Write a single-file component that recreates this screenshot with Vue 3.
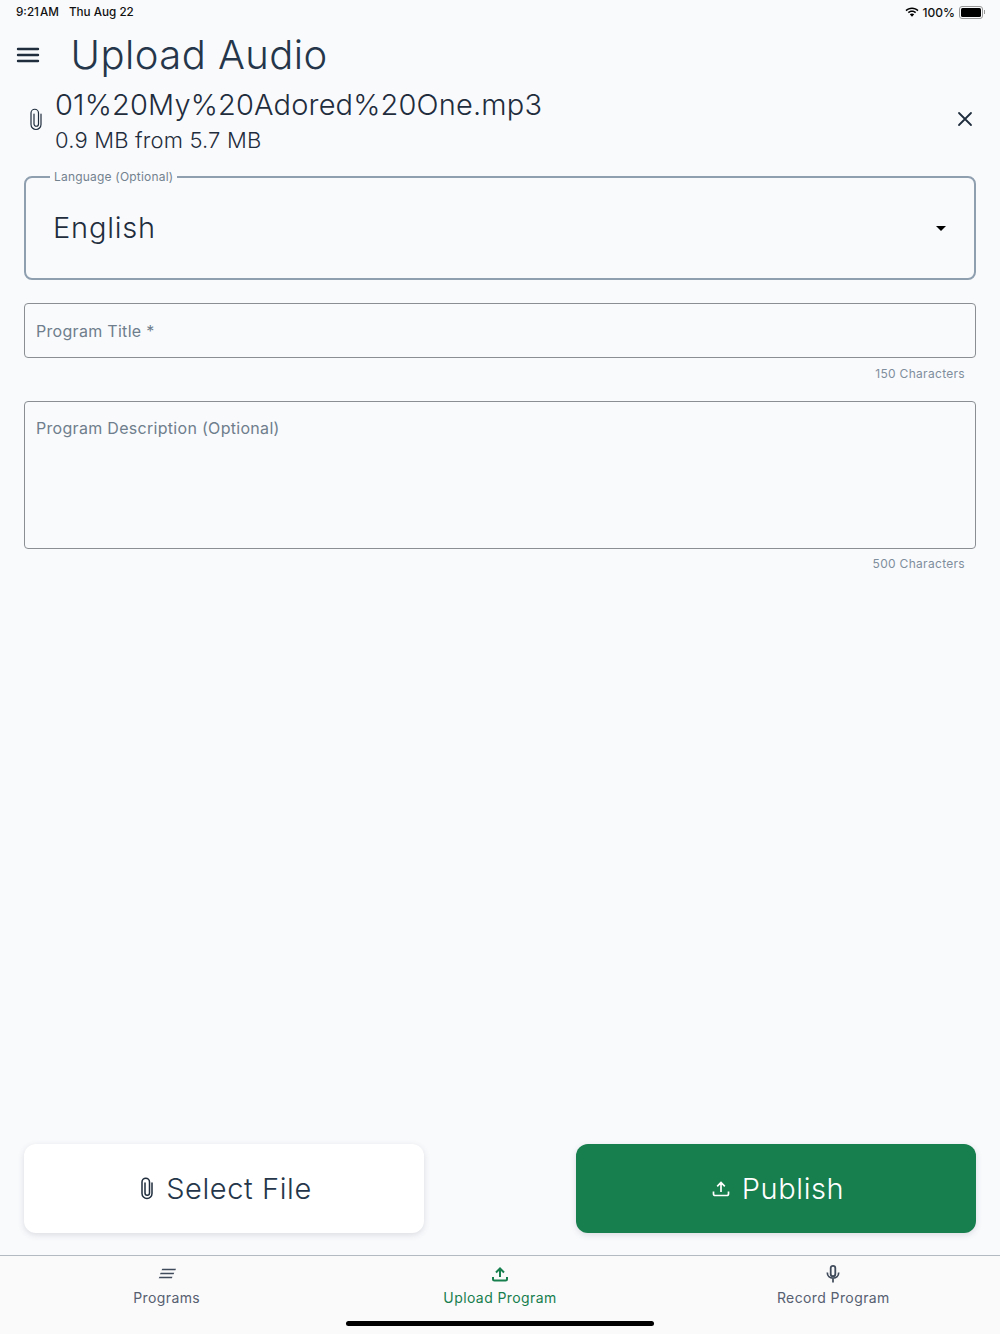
<template>
  <div class="page">
    <div class="status">
      <span class="time">9:21<span class="thin">AM</span></span>
      <span class="date">Thu Aug 22</span>
      <span class="status-right">
        <svg class="wifi" width="14" height="11" viewBox="0 0 14 11">
          <path d="M7 .4C4.500.4 2.200 1.400.5 3l1.100 1.200C3 2.800 4.900 2 7 2s4 .8 5.400 2.200L13.500 3C11.800 1.400 9.500.4 7 .4z" fill="#000"/>
          <path d="M7 3.400c-1.600 0-3.100.6-4.200 1.700l1.100 1.200C4.700 5.500 5.800 5 7 5s2.300.5 3.100 1.300l1.100-1.200C10.100 4 8.600 3.400 7 3.400z" fill="#000"/>
          <path d="M7 6.400c-.9 0-1.600.3-2.200.9L7 9.800l2.200-2.500C8.600 6.700 7.900 6.400 7 6.400z" fill="#000"/>
        </svg>
        <span>100%</span>
        <span class="battery"><i></i></span>
        <span class="nub"></span>
      </span>
    </div>

    <header class="header">
      <svg class="menu" width="24" height="18" viewBox="0 0 24 18">
        <path d="M2 3h20M2 9h20M2 15h20" stroke="#1f2d3d" stroke-width="2.400" stroke-linecap="round"/>
      </svg>
      <h1>Upload Audio</h1>
    </header>

    <div class="file-row">
      <svg class="clip" width="14" height="23" viewBox="0 0 14 23">
        <path d="M12 6v10.500a5 5 0 0 1-10 0V5a3.750 3.750 0 0 1 7.500 0v11a2.250 2.250 0 0 1-4.500 0V6" fill="none" stroke="#1f2d3d" stroke-width="1.200" stroke-linecap="round"/>
      </svg>
      <div class="file-text">
        <div class="file-name">01%20My%20Adored%20One.mp3</div>
        <div class="file-size">0.9 MB from 5.7 MB</div>
      </div>
      <svg class="close" width="16" height="16" viewBox="0 0 16 16">
        <path d="M2 2l12 12M14 2L2 14" stroke="#1f2d3d" stroke-width="1.800" stroke-linecap="round"/>
      </svg>
    </div>

    <div class="form">
      <fieldset class="select">
        <legend>Language (Optional)</legend>
        <span class="select-value">English</span>
        <span class="caret"></span>
      </fieldset>

      <div class="input">Program Title *</div>
      <div class="count">150 Characters</div>

      <div class="input area">Program Description (Optional)</div>
      <div class="count">500 Characters</div>
    </div>

    <div class="actions">
      <button class="btn btn-white">
        <svg width="14" height="23" viewBox="0 0 14 23">
          <path d="M12 6v10.500a5 5 0 0 1-10 0V5a3.750 3.750 0 0 1 7.500 0v11a2.250 2.250 0 0 1-4.500 0V6" fill="none" stroke="#1f2d3d" stroke-width="1.500" stroke-linecap="round"/>
        </svg>
        Select File
      </button>
      <button class="btn btn-green">
        <svg width="18" height="18" viewBox="0 0 18 18">
          <path d="M9 12V2.500M5.200 6.300L9 2.500l3.800 3.800M1.500 11.500v2.500a1.500 1.500 0 0 0 1.500 1.500h12a1.500 1.500 0 0 0 1.500-1.500v-2.500" fill="none" stroke="#fff" stroke-width="1.700"/>
        </svg>
        Publish
      </button>
    </div>

    <nav class="tabs">
      <div v-for="tab in tabs" :key="tab.label" class="tab" :class="{ active: tab.active }">
        <svg width="20" height="20" viewBox="0 0 20 20">
          <path v-if="tab.icon === 'list'" d="M5.300 4.700H19l-.6 1.600H4.500zM3.700 8.700h13.500l-.6 1.600H2.900zM2.500 12.700h13l-.6 1.600H1.700z" fill="currentColor"/>
          <path v-else-if="tab.icon === 'upload'" d="M10 13V4.500M6 8.500l4-4 4 4M3 13v2a1.500 1.500 0 0 0 1.500 1.500h11A1.500 1.500 0 0 0 17 15v-2" fill="none" stroke="currentColor" stroke-width="2"/>
          <template v-else>
            <rect x="7.700" y="1.800" width="4.600" height="10.400" rx="2.300" fill="none" stroke="currentColor" stroke-width="1.800"/>
            <path d="M4.300 8.500c0 3.300 2.500 5.600 5.700 5.600s5.700-2.300 5.700-5.600M10 14v4.500" fill="none" stroke="currentColor" stroke-width="1.700"/>
          </template>
        </svg>
        <span>{{ tab.label }}</span>
      </div>
      <div class="home-bar"></div>
    </nav>
  </div>
</template>

<script setup>
const tabs = [
  { label: 'Programs', icon: 'list' },
  { label: 'Upload Program', icon: 'upload', active: true },
  { label: 'Record Program', icon: 'mic' }
]
</script>

<style>
html, body {
  margin: 0;
  background: #f9fafc;
}
</style>

<style scoped>
.page {
  height: 1334px;
  display: flex;
  flex-direction: column;
  background: #f9fafc;
  font-family: Inter, "Liberation Sans", sans-serif;
  color: #1f2d3d;
  overflow: hidden;
}
.status {
  height: 24px;
  flex: none;
  display: flex;
  align-items: center;
  padding: 0 15px 0 16px;
  font-size: 11.700px;
  font-weight: 500;
  color: #111;
  box-sizing: border-box;
}
.thin {
  margin-left: 1px;
}
.date {
  margin-left: 10px;
}
.status-right {
  margin-left: auto;
  display: flex;
  align-items: center;
  gap: 4px;
  font-size: 12px;
}
.battery {
  width: 20px;
  height: 9px;
  border: 1px solid #999;
  border-radius: 3px;
  padding: 1px;
  display: flex;
}
.battery i {
  flex: 1;
  background: #000;
  border-radius: 1.500px;
}
.nub {
  width: 1px;
  height: 4px;
  background: #999;
  margin-left: -3px;
}
.header {
  height: 62px;
  flex: none;
  display: flex;
  align-items: center;
  padding-left: 16px;
}
.menu {
  flex: none;
}
.header h1 {
  margin: 0 0 2px 30.500px;
  font-size: 40px;
  font-weight: 350;
  letter-spacing: 0.450px;
  color: #25364a;
}
.file-row {
  height: 66px;
  flex: none;
  display: flex;
  align-items: center;
  padding: 0 27px 0 29px;
}
.clip {
  flex: none;
}
.file-text {
  margin-left: 12px;
  flex: 1;
  padding-top: 5px;
}
.file-name {
  font-size: 29px;
  line-height: 37px;
  font-weight: 350;
  letter-spacing: 0.160px;
}
.file-size {
  font-size: 22px;
  line-height: 34px;
  font-weight: 350;
  letter-spacing: 0.170px;
}
.form {
  padding: 0 24px;
  flex: 1;
}
.select {
  margin: 18px 0 0;
  padding: 0 27px;
  height: 110px;
  box-sizing: border-box;
  border: 2px solid #8f9fb0;
  border-radius: 8px;
  display: flex;
  align-items: center;
  position: relative;
}
.select legend {
  padding: 0 4px;
  font-size: 12px;
  line-height: 14px;
  letter-spacing: 0.2px;
  color: #73828f;
  margin-left: -3px;
}
.select-value {
  font-size: 29px;
  font-weight: 350;
  letter-spacing: 0.800px;
  margin-top: -8px;
}
.caret {
  position: absolute;
  right: 28px;
  top: 42px;
  border: 5px solid transparent;
  border-top: 5px solid #000;
  border-bottom: 0;
}
.input {
  margin-top: 23px;
  height: 55px;
  box-sizing: border-box;
  border: 1px solid #8b8f94;
  border-radius: 4px;
  padding: 0 11px;
  display: flex;
  align-items: center;
  font-size: 16px;
  letter-spacing: 0.3px;
  color: #6f7e8c;
}
.area {
  margin-top: 19px;
  height: 148px;
  align-items: flex-start;
  padding-top: 16px;
}
.count {
  text-align: right;
  padding-right: 11px;
  font-size: 12px;
  line-height: 16px;
  letter-spacing: 0.300px;
  color: #7f8e9d;
  margin-top: 8px;
}
.area + .count {
  margin-top: 7px;
}
.actions {
  flex: none;
  display: flex;
  justify-content: space-between;
  padding: 0 24px;
  margin-bottom: 22px;
}
.btn {
  width: 400px;
  height: 89px;
  border: 0;
  border-radius: 12px;
  display: flex;
  align-items: center;
  justify-content: center;
  gap: 12px;
  padding: 0 0 0 4px;
  font-family: inherit;
  font-size: 29px;
  font-weight: 350;
  letter-spacing: 0.600px;
  box-shadow: 0 2px 6px rgba(60, 70, 90, 0.16);
}
.btn-white {
  background: #fff;
  color: #25364a;
}
.btn-green {
  background: #177e4d;
  color: #fff;
}
.tabs {
  flex: none;
  height: 78px;
  border-top: 1px solid #b4bac2;
  background: #fafafb;
  display: flex;
  position: relative;
}
.tab {
  flex: 1;
  display: flex;
  flex-direction: column;
  align-items: center;
  padding-top: 8px;
  font-size: 14px;
  letter-spacing: 0.4px;
  color: #566070;
}
.tab svg {
  margin-bottom: 5px;
  color: #3f4a5a;
}
.tab.active,
.tab.active svg {
  color: #177e4d;
}
.home-bar {
  position: absolute;
  left: 346px;
  bottom: 8px;
  width: 308px;
  height: 5px;
  border-radius: 3px;
  background: #000;
}
</style>
